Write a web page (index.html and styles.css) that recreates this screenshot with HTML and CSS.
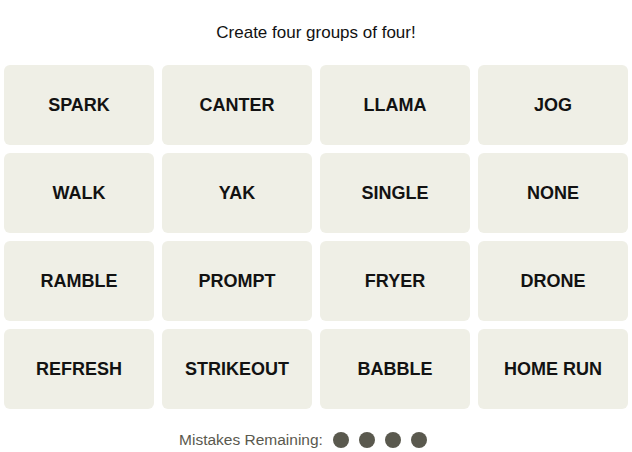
FILE: index.html
```html
<!DOCTYPE html>
<html lang="en">
  <head>
    <meta charset="UTF-8" />
    <meta name="viewport" content="width=device-width, initial-scale=1.0" />
    <title>Connections</title>
    <link rel="stylesheet" href="styles.css">
  </head>
  <body>
    <div class="game">
      <p class="prompt">Create four groups of four!</p>

      <!-- word board -->
      <div class="board">
        <button class="tile">SPARK</button>
        <button class="tile">CANTER</button>
        <button class="tile">LLAMA</button>
        <button class="tile">JOG</button>
        <button class="tile">WALK</button>
        <button class="tile">YAK</button>
        <button class="tile">SINGLE</button>
        <button class="tile">NONE</button>
        <button class="tile">RAMBLE</button>
        <button class="tile">PROMPT</button>
        <button class="tile">FRYER</button>
        <button class="tile">DRONE</button>
        <button class="tile">REFRESH</button>
        <button class="tile">STRIKEOUT</button>
        <button class="tile">BABBLE</button>
        <button class="tile">HOME RUN</button>
      </div>

      <div class="mistakes">
        <span class="mistakes-label">Mistakes Remaining:</span>
        <span class="dots">
          <span class="dot"></span>
          <span class="dot"></span>
          <span class="dot"></span>
          <span class="dot"></span>
        </span>
      </div>
    </div>
  </body>
</html>
```

FILE: styles.css
```css
/* Basic reset */
body,
html {
  margin: 0;
  padding: 0;
  background: #fff;
  font-family: "Liberation Sans", Arial, sans-serif;
  color: #121212;
}

.game {
  width: 632px;
}

.prompt {
  margin: 0;
  height: 65px;
  line-height: 65px;
  text-align: center;
  font-size: 17px;
}

/* 4x4 grid of words */
.board {
  display: grid;
  grid-template-columns: repeat(4, 150px);
  grid-auto-rows: 80px;
  gap: 8px;
  padding: 0 4px;
}

.tile {
  border: none;
  border-radius: 6px;
  background-color: #efefe6;
  color: #121212;
  font-family: "Liberation Sans", Arial, sans-serif;
  font-weight: bold;
  font-size: 18px;
  padding: 0;
  cursor: pointer;
}

.mistakes {
  display: flex;
  justify-content: center;
  align-items: center;
  height: 24px;
  margin-top: 19px;
  padding-right: 26px;
  color: #5a594e;
  font-size: 15.5px;
}

.mistakes-label {
  margin-right: 10px;
}

.dots {
  display: flex;
  gap: 10px;
}

.dot {
  width: 16px;
  height: 16px;
  border-radius: 50%;
  background-color: #5a594e;
}
```
